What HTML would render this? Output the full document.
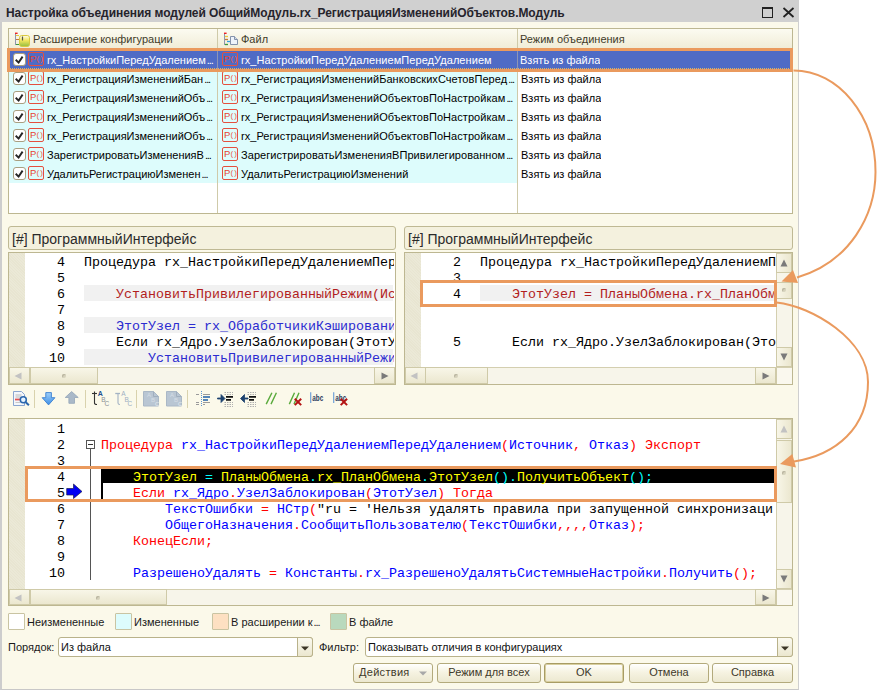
<!DOCTYPE html><html lang="ru"><head><meta charset="utf-8"><title>Настройка объединения модулей</title><style>
*{box-sizing:border-box}
html,body{margin:0;padding:0}
body{width:882px;height:690px;background:#fff;position:relative;overflow:hidden;font-family:"Liberation Sans",sans-serif;font-size:11px;color:#1a1a1a}
.a{position:absolute}
#win{left:0;top:0;width:799px;height:690px;background:#fbf9ea;border-left:2px solid #cdcdcd;border-right:1px solid #cfcfcf;border-bottom:1px solid #c8c8c8}
#tbar{left:0;top:0;width:799px;height:22px;background:#d0d0d0}
#title{left:6px;top:5px;font-size:12px;font-weight:bold;line-height:16px;white-space:nowrap;color:#26242c;letter-spacing:-0.06px}
.t{white-space:nowrap;line-height:20px;height:19px;overflow:hidden}
.box{border:1px solid #bdb791;background:#fff}
.hdr{background:linear-gradient(#fcfbf1,#f0ecd6);}
.ht{color:#423c2a}
.cy{background:#ddfcfc}
.el{letter-spacing:-1.1px;margin-left:1px}
.pi{width:16px;height:14px;border:1px solid #e4503e;border-radius:2px;background:transparent;color:#e8412f;font-size:9.5px;line-height:12px;text-align:left;padding-left:1px;letter-spacing:0;overflow:hidden;white-space:nowrap}
.pi i{font-style:normal;color:#ea5a45;font-size:8px;letter-spacing:1px;position:relative;top:-1px;margin-left:0.2px}
.cb{width:13px;height:13px;border:1px solid #a99f80;border-radius:3px;background:#fff}
.code{margin-top:2px;font-family:"Liberation Mono",monospace;font-size:13.33px;line-height:16px;white-space:pre;height:16px;overflow:hidden;color:#000}
.ln{margin-top:2px;font-family:"Liberation Mono",monospace;font-size:13.33px;line-height:16px;text-align:right;width:40px;height:16px;color:#000}
.gut{background:#e8e5d1;background-image:repeating-linear-gradient(45deg,rgba(255,255,255,.14) 0 1px,transparent 1px 2px)}
.sb{background:#f7f5ea}
.grip{width:4px;height:4px;border-radius:2px;background:#d6d2bc;box-shadow:inset 1px 1px 0 #b9b5a0}
.sbtn{background:linear-gradient(#f8f6e8,#ebe7cf);border:1px solid #cfcaa8}
.sbtnv{background:linear-gradient(90deg,#f8f6e8,#ebe7cf);border:1px solid #cfcaa8}
.btn{height:20px;top:663px;border:1px solid #b3aa7c;border-radius:3px;background:linear-gradient(#ffffff,#f6f3e2 45%,#ece8d0);text-align:center;line-height:17px;color:#40392a;font-size:11px}
.inp{height:20px;top:637px;border:1px solid #b9b28a;border-radius:3px;background:#fff;line-height:18px;padding-left:2px;white-space:nowrap;overflow:hidden;color:#111}
.dd{width:16px;height:20px;top:637px;border:1px solid #b9b28a;border-radius:0 3px 3px 0;background:linear-gradient(#fbfaf0,#ebe7cf)}
.lg{width:17px;height:17px;top:613px;border:1px solid #c9c4a2;border-radius:1px}
.ob{border:3px solid #ea9a5e}
.r{color:#f00}.b{color:#00f}.y{color:#ff0}.c{color:#0ff}.dr{color:#b21e1e}.db{color:#2b2bd0}
</style></head><body>
<div id="win" class="a"></div>
<div id="tbar" class="a"></div>
<div id="title" class="a">Настройка объединения модулей ОбщийМодуль.rx_РегистрацияИзмененийОбъектов.Модуль</div>
<svg class="a" style="left:760px;top:5px" width="38" height="15" viewBox="0 0 38 15"><rect x="2.5" y="3" width="10" height="9.5" fill="none" stroke="#222" stroke-width="1"/><rect x="2" y="2" width="11" height="2" fill="#222"/><path d="M23.5 3 L33.5 12 M33.5 3 L23.5 12" stroke="#222" stroke-width="1.8" fill="none"/></svg>
<div class="a box" style="left:8px;top:28px;width:785px;height:186px"></div>
<div class="a hdr" style="left:9px;top:29px;width:783px;height:20px"></div>
<div class="a" style="left:217px;top:29px;width:1px;height:184px;background:#cfcaa9"></div>
<div class="a" style="left:517px;top:29px;width:1px;height:184px;background:#cfcaa9"></div>
<svg class="a" style="left:13px;top:32px" width="18" height="16" viewBox="0 0 18 16"><defs><linearGradient id="yg" x1="0" y1="0" x2="0" y2="1"><stop offset="0" stop-color="#fffef0"/><stop offset="0.45" stop-color="#f2e65e"/><stop offset="1" stop-color="#94bd40"/></linearGradient></defs><path d="M2.500 1.500v11.500" stroke="#8f96ad" fill="none"/><path d="M3 3.500h3" stroke="#e8c63a"/><path d="M3 7.500h3" stroke="#c47a3a"/><path d="M3 12.500h3" stroke="#3f9a3a"/><rect x="2" y="0.600" width="2.600" height="1.400" fill="#ee2222"/><rect x="6.500" y="3.500" width="10" height="11" rx="2.200" fill="url(#yg)" stroke="#d9c93e"/><path d="M9.500 4.500v4" stroke="#55584a" stroke-width="1.200"/></svg>
<div class="a t ht" style="left:33px;top:29px;height:20px;line-height:20px">Расширение конфигурации</div>
<svg class="a" style="left:222px;top:32px" width="17" height="15" viewBox="0 0 17 15"><path d="M2.500 1.500v11.500" stroke="#8f96ad" fill="none"/><rect x="2" y="0.600" width="2.600" height="1.400" fill="#ee2222"/><path d="M3 4.500h3" stroke="#efc93a" stroke-width="1.300"/><path d="M3 7.500h3" stroke="#c47a3a" stroke-width="1.300"/><path d="M5 9.500h3" stroke="#2f9fe0" stroke-width="1.300"/><path d="M3 12.500h3" stroke="#3f9a3a" stroke-width="1.300"/><path d="M8.500 4.500h4l3 3v5h-7z" fill="#eef3fb" stroke="#8493ab"/><path d="M12.500 4.500v3h3" fill="#cfd9e8" stroke="#8493ab"/></svg>
<div class="a t ht" style="left:241px;top:29px;height:20px;line-height:20px">Файл</div>
<div class="a t ht" style="left:520px;top:29px;height:20px;line-height:20px">Режим объединения</div>
<div class="a" style="left:9px;top:50px;width:783px;height:19px;background:#4f6bc5"></div>
<div class="a" style="left:217px;top:50px;width:1px;height:19px;background:#8d95b5"></div>
<div class="a" style="left:517px;top:50px;width:1px;height:19px;background:#8d95b5"></div>
<div class="a cb" style="left:13px;top:53px"><svg width="11" height="11" viewBox="0 0 11 11" style="display:block"><path d="M1.700 5.800 L4.600 8.600 L8.600 2.600" stroke="#262626" stroke-width="1.900" fill="none"/></svg></div>
<div class="a pi" style="left:28px;top:52px;background:transparent;">P<i>()</i></div>
<div class="a t" style="left:47px;top:50px;width:169px;color:#fff">rx_НастройкиПередУдалением<span class="el">...</span></div>
<div class="a pi" style="left:222px;top:52px;background:transparent;">P<i>()</i></div>
<div class="a t" style="left:241px;top:50px;width:275px;letter-spacing:0.06px;color:#fff">rx_НастройкиПередУдалениемПередУдалением</div>
<div class="a t" style="left:520px;top:50px;color:#fff">Взять из файла</div>
<div class="a cy" style="left:9px;top:69px;width:208px;height:19px"></div>
<div class="a cy" style="left:218px;top:69px;width:299px;height:19px"></div>
<div class="a cb" style="left:13px;top:72px"><svg width="11" height="11" viewBox="0 0 11 11" style="display:block"><path d="M1.700 5.800 L4.600 8.600 L8.600 2.600" stroke="#262626" stroke-width="1.900" fill="none"/></svg></div>
<div class="a pi" style="left:28px;top:71px;">P<i>()</i></div>
<div class="a t" style="left:47px;top:69px;width:169px;color:#000">rx_РегистрацияИзмененийБан<span class="el">...</span></div>
<div class="a pi" style="left:222px;top:71px;">P<i>()</i></div>
<div class="a t" style="left:241px;top:69px;width:275px;letter-spacing:0.06px;color:#000">rx_РегистрацияИзмененийБанковскихСчетовПеред<span class="el">...</span></div>
<div class="a t" style="left:521px;top:69px;color:#000">Взять из файла</div>
<div class="a cy" style="left:9px;top:88px;width:208px;height:19px"></div>
<div class="a cy" style="left:218px;top:88px;width:299px;height:19px"></div>
<div class="a cb" style="left:13px;top:91px"><svg width="11" height="11" viewBox="0 0 11 11" style="display:block"><path d="M1.700 5.800 L4.600 8.600 L8.600 2.600" stroke="#262626" stroke-width="1.900" fill="none"/></svg></div>
<div class="a pi" style="left:28px;top:90px;">P<i>()</i></div>
<div class="a t" style="left:47px;top:88px;width:169px;color:#000">rx_РегистрацияИзмененийОбъ<span class="el">...</span></div>
<div class="a pi" style="left:222px;top:90px;">P<i>()</i></div>
<div class="a t" style="left:241px;top:88px;width:275px;letter-spacing:0.06px;color:#000">rx_РегистрацияИзмененийОбъектовПоНастройкам<span class="el">...</span></div>
<div class="a t" style="left:521px;top:88px;color:#000">Взять из файла</div>
<div class="a cy" style="left:9px;top:107px;width:208px;height:19px"></div>
<div class="a cy" style="left:218px;top:107px;width:299px;height:19px"></div>
<div class="a cb" style="left:13px;top:110px"><svg width="11" height="11" viewBox="0 0 11 11" style="display:block"><path d="M1.700 5.800 L4.600 8.600 L8.600 2.600" stroke="#262626" stroke-width="1.900" fill="none"/></svg></div>
<div class="a pi" style="left:28px;top:109px;">P<i>()</i></div>
<div class="a t" style="left:47px;top:107px;width:169px;color:#000">rx_РегистрацияИзмененийОбъ<span class="el">...</span></div>
<div class="a pi" style="left:222px;top:109px;">P<i>()</i></div>
<div class="a t" style="left:241px;top:107px;width:275px;letter-spacing:0.06px;color:#000">rx_РегистрацияИзмененийОбъектовПоНастройкам<span class="el">...</span></div>
<div class="a t" style="left:521px;top:107px;color:#000">Взять из файла</div>
<div class="a cy" style="left:9px;top:126px;width:208px;height:19px"></div>
<div class="a cy" style="left:218px;top:126px;width:299px;height:19px"></div>
<div class="a cb" style="left:13px;top:129px"><svg width="11" height="11" viewBox="0 0 11 11" style="display:block"><path d="M1.700 5.800 L4.600 8.600 L8.600 2.600" stroke="#262626" stroke-width="1.900" fill="none"/></svg></div>
<div class="a pi" style="left:28px;top:128px;">P<i>()</i></div>
<div class="a t" style="left:47px;top:126px;width:169px;color:#000">rx_РегистрацияИзмененийОбъ<span class="el">...</span></div>
<div class="a pi" style="left:222px;top:128px;">P<i>()</i></div>
<div class="a t" style="left:241px;top:126px;width:275px;letter-spacing:0.06px;color:#000">rx_РегистрацияИзмененийОбъектовПоНастройкам<span class="el">...</span></div>
<div class="a t" style="left:521px;top:126px;color:#000">Взять из файла</div>
<div class="a cy" style="left:9px;top:145px;width:208px;height:19px"></div>
<div class="a cy" style="left:218px;top:145px;width:299px;height:19px"></div>
<div class="a cb" style="left:13px;top:148px"><svg width="11" height="11" viewBox="0 0 11 11" style="display:block"><path d="M1.700 5.800 L4.600 8.600 L8.600 2.600" stroke="#262626" stroke-width="1.900" fill="none"/></svg></div>
<div class="a pi" style="left:28px;top:147px;">P<i>()</i></div>
<div class="a t" style="left:47px;top:145px;width:169px;color:#000">ЗарегистрироватьИзмененияВ<span class="el">...</span></div>
<div class="a pi" style="left:222px;top:147px;">P<i>()</i></div>
<div class="a t" style="left:241px;top:145px;width:275px;letter-spacing:0.06px;color:#000">ЗарегистрироватьИзмененияВПривилегированном<span class="el">...</span></div>
<div class="a t" style="left:521px;top:145px;color:#000">Взять из файла</div>
<div class="a cy" style="left:9px;top:164px;width:208px;height:19px"></div>
<div class="a cy" style="left:218px;top:164px;width:299px;height:19px"></div>
<div class="a cb" style="left:13px;top:167px"><svg width="11" height="11" viewBox="0 0 11 11" style="display:block"><path d="M1.700 5.800 L4.600 8.600 L8.600 2.600" stroke="#262626" stroke-width="1.900" fill="none"/></svg></div>
<div class="a pi" style="left:28px;top:166px;">P<i>()</i></div>
<div class="a t" style="left:47px;top:164px;width:169px;color:#000">УдалитьРегистрациюИзменен<span class="el">...</span></div>
<div class="a pi" style="left:222px;top:166px;">P<i>()</i></div>
<div class="a t" style="left:241px;top:164px;width:275px;letter-spacing:0.06px;color:#000">УдалитьРегистрациюИзменений</div>
<div class="a t" style="left:521px;top:164px;color:#000">Взять из файла</div>
<div class="a" style="left:10px;top:68px;width:781px;height:1px;background:repeating-linear-gradient(90deg,#d9b46a 0 1px,transparent 1px 2px)"></div>
<div class="a ob" style="left:7px;top:48px;width:786px;height:24px"></div>
<div class="a" style="left:8px;top:226px;width:388px;height:24px;border:1px solid #bfb994;border-radius:3px;background:#f4f1de"></div>
<div class="a" style="left:12px;top:227px;height:24px;line-height:24px;font-size:14px;white-space:nowrap;color:#2a2a2a">[#] ПрограммныйИнтерфейс</div>
<div class="a" style="left:404px;top:226px;width:389px;height:24px;border:1px solid #bfb994;border-radius:3px;background:#f4f1de"></div>
<div class="a" style="left:408px;top:227px;height:24px;line-height:24px;font-size:14px;white-space:nowrap;color:#2a2a2a">[#] ПрограммныйИнтерфейс</div>
<div class="a box" style="left:8px;top:252px;width:388px;height:133px"></div>
<div class="a gut" style="left:9px;top:253px;width:16px;height:114px"></div>
<div class="a ln" style="left:25px;top:253px">4</div>
<div class="a code " style="left:84px;top:253px;width:310px">Процедура rx_НастройкиПередУдалениемПеред</div>
<div class="a ln" style="left:25px;top:269px">5</div>
<div class="a" style="left:84px;top:285px;width:309px;height:16px;background:#f1f1f1"></div>
<div class="a ln" style="left:25px;top:285px">6</div>
<div class="a code dr" style="left:84px;top:285px;width:310px">    УстановитьПривилегированныйРежим(Ис</div>
<div class="a ln" style="left:25px;top:301px">7</div>
<div class="a" style="left:84px;top:317px;width:309px;height:16px;background:#f1f1f1"></div>
<div class="a ln" style="left:25px;top:317px">8</div>
<div class="a code db" style="left:84px;top:317px;width:310px">    ЭтотУзел = rx_ОбработчикиКэшировани</div>
<div class="a ln" style="left:25px;top:333px">9</div>
<div class="a code " style="left:84px;top:333px;width:310px">    Если rx_Ядро.УзелЗаблокирован(ЭтотУ</div>
<div class="a" style="left:84px;top:349px;width:309px;height:16px;background:#f1f1f1"></div>
<div class="a ln" style="left:25px;top:349px">10</div>
<div class="a code db" style="left:84px;top:349px;width:310px">        УстановитьПривилегированныйРежи</div>
<div class="a sb" style="left:9px;top:367px;width:386px;height:17px;border-top:1px solid #d4cfb0"></div>
<div class="a sbtn" style="left:9px;top:367px;width:21px;height:17px"></div>
<svg class="a" style="left:13px;top:371px" width="10" height="10" viewBox="-5 -5 10 10"><path d="M3.500 -3.500v7L-3.500 0z" fill="#c2c2c2"/></svg>
<div class="a sbtn" style="left:374px;top:367px;width:21px;height:17px"></div>
<svg class="a" style="left:380px;top:371px" width="10" height="10" viewBox="-5 -5 10 10"><path d="M-3.500 -3.500v7L3.500 0z" fill="#7a7a7a"/></svg>
<div class="a sbtn" style="left:30px;top:367px;width:68px;height:17px"></div>
<div class="a grip" style="left:62px;top:374px"></div>
<div class="a box" style="left:404px;top:252px;width:389px;height:133px"></div>
<div class="a gut" style="left:405px;top:253px;width:16px;height:114px"></div>
<div class="a ln" style="left:421px;top:253px">2</div>
<div class="a code " style="left:480px;top:253px;width:296px">Процедура rx_НастройкиПередУдалениемП</div>
<div class="a ln" style="left:421px;top:269px">3</div>
<div class="a" style="left:480px;top:285px;width:296px;height:16px;background:#f1f1f1"></div>
<div class="a ln" style="left:421px;top:285px">4</div>
<div class="a code dr" style="left:480px;top:285px;width:296px">    ЭтотУзел = ПланыОбмена.rx_ПланОбм</div>
<div class="a ln" style="left:421px;top:333px">5</div>
<div class="a code " style="left:480px;top:333px;width:296px">    Если rx_Ядро.УзелЗаблокирован(Это</div>
<div class="a sb" style="left:405px;top:367px;width:387px;height:17px;border-top:1px solid #d4cfb0"></div>
<div class="a sbtn" style="left:405px;top:367px;width:21px;height:17px"></div>
<svg class="a" style="left:409px;top:371px" width="10" height="10" viewBox="-5 -5 10 10"><path d="M3.500 -3.500v7L-3.500 0z" fill="#c2c2c2"/></svg>
<div class="a sbtn" style="left:755px;top:367px;width:21px;height:17px"></div>
<svg class="a" style="left:761px;top:371px" width="10" height="10" viewBox="-5 -5 10 10"><path d="M-3.500 -3.500v7L3.500 0z" fill="#7a7a7a"/></svg>
<div class="a sbtn" style="left:425px;top:367px;width:63px;height:17px"></div>
<div class="a grip" style="left:454px;top:374px"></div>
<div class="a" style="left:776px;top:367px;width:16px;height:17px;background:#faf8ee;border-left:1px solid #cfcaa8;border-top:1px solid #d4cfb0"></div>
<div class="a sb" style="left:776px;top:253px;width:16px;height:114px;border-left:1px solid #d4cfb0"></div>
<div class="a sbtnv" style="left:776px;top:253px;width:16px;height:20px"></div>
<svg class="a" style="left:779px;top:258px" width="10" height="10" viewBox="-5 -5 10 10"><path d="M-3.500 3.500h7L0 -3.500z" fill="#7a7a7a"/></svg>
<div class="a sbtnv" style="left:776px;top:347px;width:16px;height:20px"></div>
<svg class="a" style="left:779px;top:352px" width="10" height="10" viewBox="-5 -5 10 10"><path d="M-3.500 -3.500h7L0 3.500z" fill="#7a7a7a"/></svg>
<div class="a sbtnv" style="left:776px;top:282px;width:16px;height:17px"></div>
<div class="a grip" style="left:782px;top:288px"></div>
<div class="a ob" style="left:420px;top:280px;width:357px;height:27px"></div>
<svg class="a" style="left:8px;top:388px" width="350" height="22" viewBox="0 0 350 22">
<defs><linearGradient id="bd" x1="0" y1="0" x2="0" y2="1"><stop offset="0" stop-color="#9fd0fa"/><stop offset="1" stop-color="#3f8fe6"/></linearGradient></defs>
<g fill="none">
<path d="M26.500 2v18M77.500 2v18M128.500 2v18M179.500 2v18" stroke="#d9d2ad"/>
<path d="M5.500 3.500h8l3 3v11h-11z" fill="#f3f6fb" stroke="#8aa5cf"/><path d="M7.500 7h6M7.500 9h6" stroke="#b8b8b8"/><path d="M7 11.500h8" stroke="#e25252" stroke-width="1.800"/><path d="M7.500 14.500h5" stroke="#c8c8c8"/><circle cx="15.300" cy="11.800" r="3" fill="#e4f2ff" stroke="#2a66ad" stroke-width="1.500"/><path d="M17.500 14l3.400 3.200" stroke="#2a66ad" stroke-width="2"/>
<path d="M37.800 4.600h5.600v5.100h3.500L40.550 16.900 34.200 9.700h3.600z" fill="url(#bd)" stroke="#3a7fd0" stroke-width="0.900"/>
<path d="M63.650 3.600L70.200 9.500h-3.700v5.800h-5.600v-5.800h-3.700z" fill="#aab9c8" stroke="#9aaabb" stroke-width="0.900"/>
<path d="M86.500 3.500v11.500q0 1.500 2.500 1.500" stroke="#333" stroke-width="1.100"/><path d="M84 5.500h5" stroke="#333" stroke-width="1.100"/>
<path d="M110 5v10q0 1.500 2 1.500" stroke="#a3b2c3" stroke-width="1.100"/><path d="M107.250 5.500h4.750" stroke="#a3b2c3" stroke-width="1.300"/>
<path d="M135.500 3.500h10l5 5v9.500h-15z" fill="#b9c6d3" stroke="#aab8c6"/><path d="M145.500 3.500v5h5" stroke="#a0aebd"/>
<path d="M158.500 3.500h10l5 5v9.500h-15z" fill="#b9c6d3" stroke="#aab8c6"/><path d="M168.500 3.500v5h5" stroke="#a0aebd"/>
<path d="M193.500 3v16" stroke="#5b93d0" stroke-dasharray="1 1"/>
<path d="M188 6.500h3M195 6.500h7M188 14.500h3M195 14.500h7M188 16.500h3M195 16.500h2" stroke="#9a9a9a" stroke-width="1.200"/><path d="M195 9h7M195 12h5" stroke="#1f5fa8" stroke-width="1.600"/>
<path d="M209.500 10h3.500v-3.500l4 4-4 4v-3.500h-3.500z" fill="#1f4470" stroke="#1f4470" stroke-width="0.800"/>
<path d="M216.500 4.500h8.500M216.500 6.500h8.500M216.500 14.500h8.500M216.500 16.500h8.500M216.500 18.500h8.500" stroke="#b0b0b0" stroke-dasharray="1.500 1"/><path d="M218 8.800h7M218 11.800h5" stroke="#111" stroke-width="1.700"/>
<path d="M240 10h-3.500v-3.500l-4 4 4 4v-3.500h3.500z" fill="#1f4470" stroke="#1f4470" stroke-width="0.800"/>
<path d="M239.500 4.500h8.500M239.500 6.500h8.500M239.500 14.500h8.500M239.500 16.500h8.500M239.500 18.500h8.500" stroke="#b0b0b0" stroke-dasharray="1.500 1"/><path d="M241 8.800h7M241 11.800h5" stroke="#111" stroke-width="1.700"/>
<path d="M258.200 16.100L263.900 4.800M263 16.100L268.400 4.800" stroke="#5aaa3c" stroke-width="1.400"/>
<path d="M281.300 16.100L286.500 4.800M286 16.100L291 4.800" stroke="#5aaa3c" stroke-width="1.400"/><path d="M286.800 10.700l6.400 6.400M293.200 10.700l-6.400 6.400" stroke="#b41414" stroke-width="2"/>
<path d="M302.700 4.200v10.800" stroke="#6fa0d8" stroke-width="1.200"/>
<path d="M325.700 4.200v10.800" stroke="#6fa0d8" stroke-width="1.200"/>
</g>
<text x="89.800" y="7.600" font-family="Liberation Sans, sans-serif" font-size="7" font-weight="bold" fill="#1d4f91">A</text>
<text x="93.300" y="13.600" font-family="Liberation Sans, sans-serif" font-size="6.500" fill="#8a8f96">B</text>
<text x="96.400" y="18.300" font-family="Liberation Sans, sans-serif" font-size="6.500" fill="#8a8f96">C</text>
<text x="113.300" y="7.600" font-family="Liberation Sans, sans-serif" font-size="6.500" fill="#9eb0c4">A</text>
<text x="116.400" y="13.600" font-family="Liberation Sans, sans-serif" font-size="6.500" fill="#9eb0c4">B</text>
<text x="119.600" y="18.300" font-family="Liberation Sans, sans-serif" font-size="6.500" fill="#9eb0c4">C</text>
<text x="139" y="8.500" font-family="Liberation Sans, sans-serif" font-size="6" fill="#d5dde6">A</text>
<text x="143" y="13.500" font-family="Liberation Sans, sans-serif" font-size="6" fill="#d5dde6">B</text>
<text x="147" y="18" font-family="Liberation Sans, sans-serif" font-size="6" fill="#e3e9ef">C</text>
<text x="162" y="8.500" font-family="Liberation Sans, sans-serif" font-size="6" fill="#d5dde6">A</text>
<text x="166" y="13.500" font-family="Liberation Sans, sans-serif" font-size="6" fill="#d5dde6">B</text>
<text x="170" y="18" font-family="Liberation Sans, sans-serif" font-size="6" fill="#e3e9ef">C</text>
<text x="304.200" y="13" font-family="Liberation Sans, sans-serif" font-size="8.500" font-weight="bold" fill="#2a3a5c" textLength="11" lengthAdjust="spacingAndGlyphs">abc</text>
<text x="327.300" y="13" font-family="Liberation Sans, sans-serif" font-size="8.500" font-weight="bold" fill="#2a3a5c" textLength="11" lengthAdjust="spacingAndGlyphs">abc</text>
<path d="M332.700 10.700l6.400 6.400M339.100 10.700l-6.400 6.400" stroke="#b41414" stroke-width="2" fill="none"/>
</svg>
<div class="a box" style="left:8px;top:418px;width:785px;height:188px"></div>
<div class="a gut" style="left:9px;top:419px;width:16px;height:170px"></div>
<div class="a" style="left:101px;top:469px;width:674px;height:14px;background:#000"></div>
<div class="a" style="left:101px;top:483px;width:2px;height:16px;background:#000"></div>
<div class="a ln" style="left:25px;top:420px">1</div>
<div class="a ln" style="left:25px;top:436px">2</div>
<div class="a code" style="left:101px;top:436px;width:675px"><span class="r">Процедура</span> <span class="b">rx_НастройкиПередУдалениемПередУдалением</span><span class="r">(</span><span class="b">Источник</span><span class="r">,</span> <span class="b">Отказ</span><span class="r">)</span> <span class="r">Экспорт</span></div>
<div class="a ln" style="left:25px;top:452px">3</div>
<div class="a ln" style="left:25px;top:468px">4</div>
<div class="a code" style="left:101px;top:468px;width:675px">    <span class="y">ЭтотУзел</span> <span class="c">=</span> <span class="y">ПланыОбмена</span><span class="c">.</span><span class="y">rx_ПланОбмена</span><span class="c">.</span><span class="y">ЭтотУзел</span><span class="c">().</span><span class="y">ПолучитьОбъект</span><span class="c">();</span></div>
<div class="a ln" style="left:25px;top:484px">5</div>
<div class="a code" style="left:101px;top:484px;width:675px">    <span class="r">Если</span> <span class="b">rx_Ядро</span><span class="r">.</span><span class="b">УзелЗаблокирован</span><span class="r">(</span><span class="b">ЭтотУзел</span><span class="r">)</span> <span class="r">Тогда</span></div>
<div class="a ln" style="left:25px;top:500px">6</div>
<div class="a code" style="left:101px;top:500px;width:675px">        <span class="b">ТекстОшибки</span> <span class="r">=</span> <span class="b">НСтр</span><span class="r">(</span>"ru = 'Нельзя удалять правила при запущенной синхронизаци</div>
<div class="a ln" style="left:25px;top:516px">7</div>
<div class="a code" style="left:101px;top:516px;width:675px">        <span class="b">ОбщегоНазначения</span><span class="r">.</span><span class="b">СообщитьПользователю</span><span class="r">(</span><span class="b">ТекстОшибки</span><span class="r">,,,,</span><span class="b">Отказ</span><span class="r">);</span></div>
<div class="a ln" style="left:25px;top:532px">8</div>
<div class="a code" style="left:101px;top:532px;width:675px">    <span class="r">КонецЕсли;</span></div>
<div class="a ln" style="left:25px;top:548px">9</div>
<div class="a ln" style="left:25px;top:564px">10</div>
<div class="a code" style="left:101px;top:564px;width:675px">    <span class="b">РазрешеноУдалять</span> <span class="r">=</span> <span class="b">Константы</span><span class="r">.</span><span class="b">rx_РазрешеноУдалятьСистемныеНастройки</span><span class="r">.</span><span class="b">Получить</span><span class="r">();</span></div>
<div class="a" style="left:90px;top:449px;width:1px;height:131px;background:#555"></div>
<div class="a" style="left:86px;top:440px;width:9px;height:9px;border:1px solid #555;background:#fff"></div>
<div class="a" style="left:88px;top:444px;width:5px;height:1px;background:#333"></div>
<svg class="a" style="left:66px;top:483px" width="17" height="16" viewBox="0 0 17 16"><path d="M0.700 5.500H7.500V1L16 8.500L7.500 15.500V12H0.700Z" fill="#0000f4" stroke="#1a1a50" stroke-width="0.700"/></svg>
<div class="a sb" style="left:9px;top:589px;width:783px;height:16px;border-top:1px solid #d4cfb0"></div>
<div class="a sbtn" style="left:9px;top:589px;width:21px;height:16px"></div>
<svg class="a" style="left:13px;top:593px" width="10" height="10" viewBox="-5 -5 10 10"><path d="M3.500 -3.500v7L-3.500 0z" fill="#c2c2c2"/></svg>
<div class="a sbtn" style="left:755px;top:589px;width:21px;height:16px"></div>
<svg class="a" style="left:761px;top:593px" width="10" height="10" viewBox="-5 -5 10 10"><path d="M-3.500 -3.500v7L3.500 0z" fill="#7a7a7a"/></svg>
<div class="a sbtn" style="left:30px;top:589px;width:137px;height:16px"></div>
<div class="a grip" style="left:96px;top:596px"></div>
<div class="a" style="left:776px;top:589px;width:16px;height:16px;background:#faf8ee;border-left:1px solid #cfcaa8;border-top:1px solid #d4cfb0"></div>
<div class="a sb" style="left:776px;top:419px;width:16px;height:170px;border-left:1px solid #d4cfb0"></div>
<div class="a sbtnv" style="left:776px;top:419px;width:16px;height:20px"></div>
<svg class="a" style="left:779px;top:424px" width="10" height="10" viewBox="-5 -5 10 10"><path d="M-3.500 3.500h7L0 -3.500z" fill="#c2c2c2"/></svg>
<div class="a sbtnv" style="left:776px;top:569px;width:16px;height:20px"></div>
<svg class="a" style="left:779px;top:574px" width="10" height="10" viewBox="-5 -5 10 10"><path d="M-3.500 -3.500h7L0 3.500z" fill="#7a7a7a"/></svg>
<div class="a sbtnv" style="left:776px;top:440px;width:16px;height:63px"></div>
<div class="a grip" style="left:782px;top:471px"></div>
<div class="a ob" style="left:25px;top:466px;width:752px;height:36px"></div>
<div class="a lg" style="left:8px;background:#ffffff"></div>
<div class="a t" style="left:27px;top:612px;width:80px">Неизмененные</div>
<div class="a lg" style="left:115px;background:#ddfcfc"></div>
<div class="a t" style="left:134px;top:612px;width:70px">Измененные</div>
<div class="a lg" style="left:212px;background:#fde0c2"></div>
<div class="a t" style="left:231px;top:612px;width:92px">В расширении к<span class="el">...</span></div>
<div class="a lg" style="left:330px;background:#b9d9bd"></div>
<div class="a t" style="left:349px;top:612px;width:50px">В файле</div>
<div class="a t" style="left:8px;top:637px">Порядок:</div>
<div class="a inp" style="left:58px;width:255px">Из файла</div>
<div class="a dd" style="left:297px"></div>
<svg class="a" style="left:301px;top:646px" width="8" height="5"><path d="M0 0.500h8L4 4.500z" fill="#3a3424"/></svg>
<div class="a t" style="left:319px;top:637px">Фильтр:</div>
<div class="a inp" style="left:365px;width:428px">Показывать отличия в конфигурациях</div>
<div class="a dd" style="left:777px"></div>
<svg class="a" style="left:781px;top:646px" width="8" height="5"><path d="M0 0.500h8L4 4.500z" fill="#3a3424"/></svg>
<div class="a btn" style="left:353px;width:80px;text-align:left;padding-left:5px;letter-spacing:0.3px">Действия</div>
<svg class="a" style="left:419px;top:671px" width="8" height="5"><path d="M0 0.500h8L4 4.500z" fill="#a8a8a8"/></svg>
<div class="a btn" style="left:437px;width:104px">Режим для всех</div>
<div class="a btn" style="left:544px;width:80px;border-color:#a89c64;box-shadow:inset 0 0 0 1px #d8cf9f">OK</div>
<div class="a btn" style="left:629px;width:80px">Отмена</div>
<div class="a btn" style="left:712px;width:81px">Справка</div>
<svg class="a" style="left:760px;top:40px" width="122" height="460" viewBox="760 40 122 460">
<path d="M793.500 70.500 C838.800 70.500 875.500 115.900 875.500 172 C875.500 215 850 262 797 277.500" fill="none" stroke="#ea9a5e" stroke-width="2"/>
<path d="M781.500 281.500 L793 270 L798 283 Z" fill="#ea9a5e"/>
<path d="M776.500 302.500 C812 306 868 340 868 382 C868 428 836 455 794 461.500" fill="none" stroke="#ea9a5e" stroke-width="2"/>
<path d="M780 464 L792.300 454 L796 467.500 Z" fill="#ea9a5e"/>
</svg>
</body></html>
